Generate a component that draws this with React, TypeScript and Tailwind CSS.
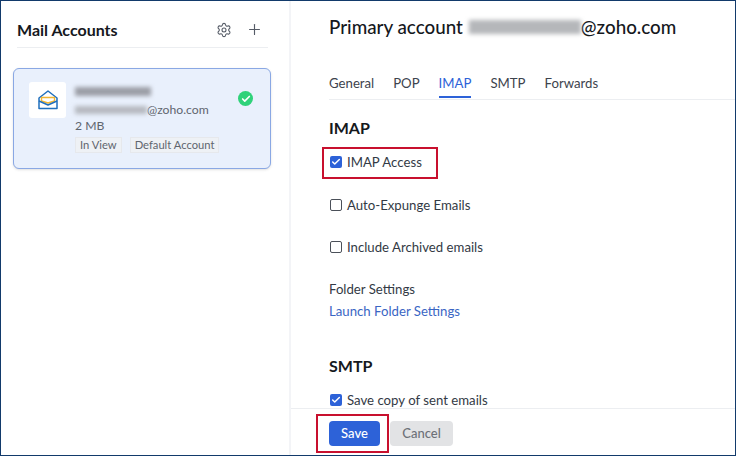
import { Settings, Plus, Check } from 'lucide-react';

const font = { fontFamily: 'Lato, "Open Sans", sans-serif' };

function CheckRow({ label, checked, className = '' }: { label: string; checked?: boolean; className?: string }) {
  return (
    <div className={`flex items-center gap-[5px] h-5 text-[13.2px] leading-5 text-[#333a45] ${className}`}>
      {checked ? (
        <span className="flex items-center justify-center w-[12px] h-[12px] rounded-[2px] bg-[#2d62d8]">
          <Check size={10} strokeWidth={3.5} className="text-white" />
        </span>
      ) : (
        <span className="w-[12px] h-[12px] rounded-[2px] border border-[#4b5059] bg-white" />
      )}
      <span>{label}</span>
    </div>
  );
}

function ZohoMailLogo() {
  return (
    <svg width="20" height="20" viewBox="0 0 20 20" fill="none">
      <path d="M1 8 L10 1 L19 8 V18.5 H1 Z" stroke="#1f6fbd" strokeWidth="1.5" strokeLinejoin="round" />
      <path d="M3.5 7.5 H16.5 V11 L10 13 L3.5 11 Z" fill="#fff" stroke="#f2b632" strokeWidth="1.4" strokeLinejoin="round" />
      <path d="M1 11 L10 15 L19 11" stroke="#1f6fbd" strokeWidth="1.5" strokeLinejoin="round" />
    </svg>
  );
}

export default function App() {
  const tabs = ['General', 'POP', 'IMAP', 'SMTP', 'Forwards'];
  return (
    <div style={font} className="relative w-[736px] h-[456px] overflow-hidden bg-white border border-[#123a6b] flex">
      {/* Sidebar */}
      <div className="w-[290px] shrink-0 px-3 border-r-2 border-[#f3f4f7]">
        <div className="ml-[4px] mr-[9px] h-[47px] flex items-center justify-between border-b border-[#eceef1] pr-[5px] pt-[11px] mb-[20px]">
          <span className="text-[16px] font-bold text-[#15181d]">Mail Accounts</span>
          <div className="flex items-center gap-[14px] text-[#555b66]">
            <Settings size={16} strokeWidth={1.6} />
            <Plus size={17} strokeWidth={1.6} />
          </div>
        </div>
        <div className="w-[258px] h-[101px] rounded-[6px] border border-[#8aa8e4] bg-[#e9f0fc] shadow-sm pl-[15px] pr-[17px] pt-[13px] flex">
          <div className="w-[37px] h-[36px] rounded-[3px] bg-white flex items-center justify-center shrink-0">
            <ZohoMailLogo />
          </div>
          <div className="ml-[9px] flex-1 text-[12.2px] leading-[17px] text-[#60656e]">
            <div className="h-[18px] flex items-center">
              <div className="w-[76px] h-[9px] bg-[#9b9ea6] blur-[2px]" />
            </div>
            <div className="h-[17px] mt-[1px] flex items-center">
              <div className="w-[72px] h-[8px] bg-[#b6b9c0] blur-[2px]" />
              <span>@zoho.com</span>
            </div>
            <div className="mt-[-1px]">2 MB</div>
            <div className="mt-[3px] flex gap-[8px] text-[11.2px] leading-[14px]">
              <span className="px-[4px] bg-[#eef1f5] border border-[#e6e8ec]">In View</span>
              <span className="px-[4px] bg-[#eef1f5] border border-[#e6e8ec]">Default Account</span>
            </div>
          </div>
          <div className="mt-[9px] w-[15px] h-[15px] rounded-full bg-[#2fd27a] flex items-center justify-center shrink-0">
            <Check size={10} strokeWidth={4} className="text-white" />
          </div>
        </div>
      </div>

      {/* Main panel */}
      <div className="flex-1 flex flex-col min-w-0">
        <div className="flex-1 overflow-hidden pl-[38px]">
          <div className="h-[46px] pt-[6px] flex items-center text-[18.8px] font-medium text-[#15181d]">
            <span>Primary account</span>
            <div className="ml-[6px] w-[112px] h-[14px] bg-[#b5b7ba] blur-[2px]" />
            <span>@zoho.com</span>
          </div>
          <div className="mt-[24px] h-[29px] flex gap-[19px] text-[13.2px] leading-[24px] text-[#3d434d] border-b border-[#eceef1]">
            {tabs.map(t => (
              <div key={t} className={t === 'IMAP' ? 'h-[27px] text-[#2d62d8] border-b-2 border-[#2d62d8]' : ''}>
                {t}
              </div>
            ))}
          </div>
          <h2 className="mt-[16px] text-[16px] leading-[24px] font-bold text-[#15181d]">IMAP</h2>
          <CheckRow label="IMAP Access" checked className="mt-[12px] pl-px" />
          <CheckRow label="Auto-Expunge Emails" className="mt-[23px] pl-px" />
          <CheckRow label="Include Archived emails" className="mt-[22px] pl-px" />
          <div className="mt-[22px] text-[13.2px] leading-5 text-[#333a45]">Folder Settings</div>
          <div className="mt-[2px] text-[13.2px] leading-5 text-[#3a66c4]">Launch Folder Settings</div>
          <h2 className="mt-[33px] text-[16px] leading-[24px] font-bold text-[#15181d]">SMTP</h2>
          <CheckRow label="Save copy of sent emails" checked className="mt-[12px] pl-px" />
        </div>
        <div className="h-[47px] shrink-0 border-t border-[#eceef1] pl-[38px] pt-[12px] flex gap-[10px] items-start bg-white">
          <button className="w-[51px] h-[25px] rounded-[4px] bg-[#2d62d8] text-white text-[13px] font-medium">Save</button>
          <button className="w-[63px] h-[25px] rounded-[4px] bg-[#e2e3e5] text-[#6d7178] text-[13px] font-medium">Cancel</button>
        </div>
      </div>

      {/* Red annotation boxes */}
      <div className="absolute left-[321px] top-[146px] w-[116px] h-[32px] border-2 border-[#c8102e]" />
      <div className="absolute left-[315px] top-[413px] w-[73px] h-[39px] border-2 border-[#c8102e]" />
    </div>
  );
}
